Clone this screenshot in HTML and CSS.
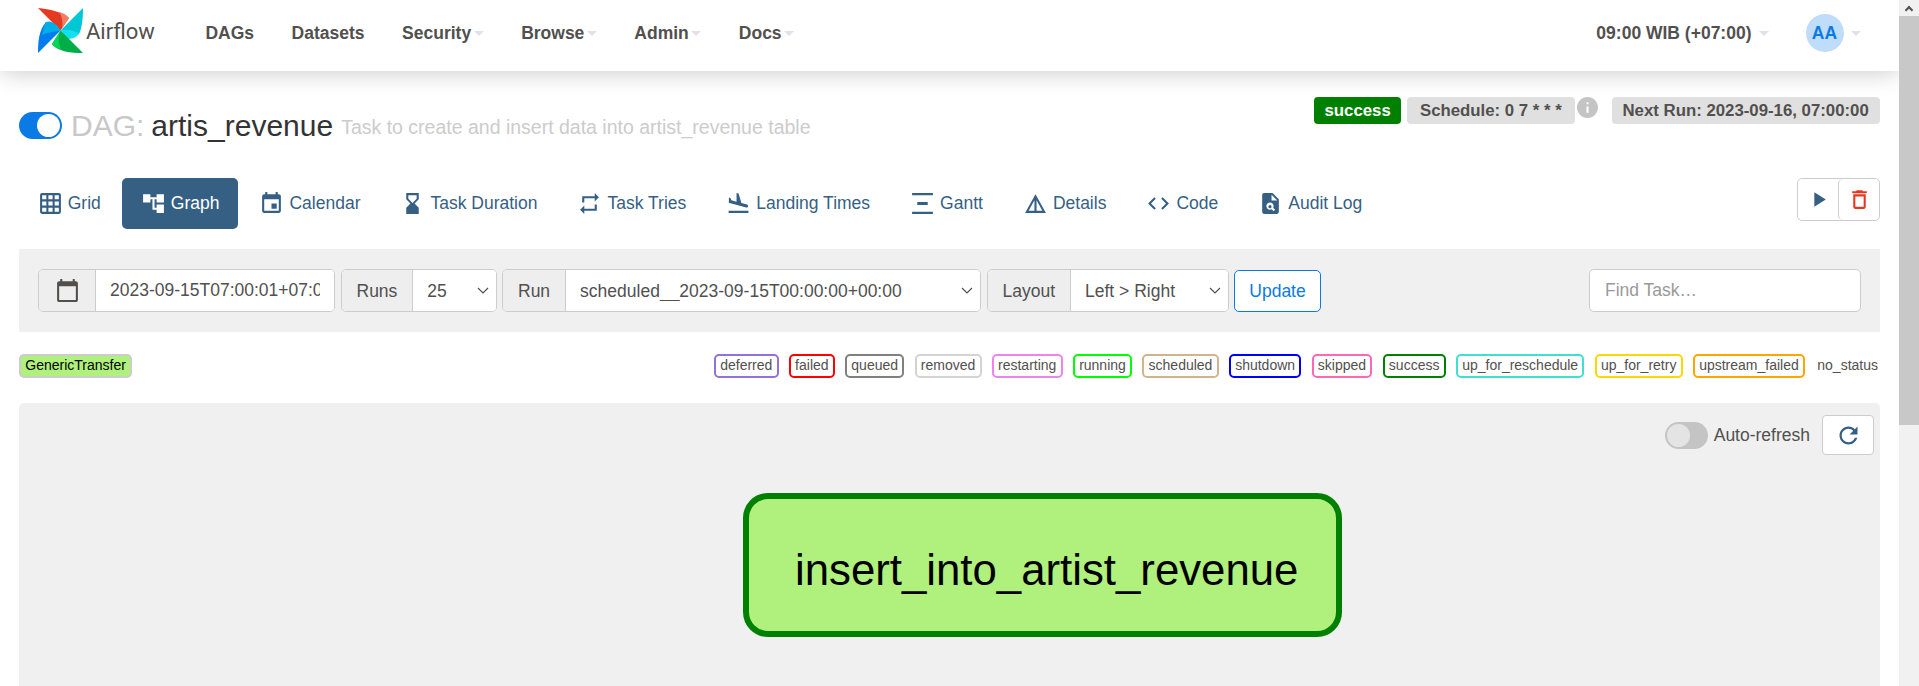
FILE: index.html
```html
<!DOCTYPE html>
<html lang="en">
<head>
  <meta charset="UTF-8" />
  <title>Airflow - artis_revenue</title>
  <link rel="stylesheet" href="styles.css">
</head>
<body>
  <div class="page">
    <nav class="navbar">
      <a class="brand">
        <svg class="pinwheel" viewBox="0 0 45 45">
          <path fill="#e43921" d="M0 0C12 1 24 4 31 10L22.5 22.5Z"/>
          <path fill="#f37c64" d="M21 4C25 5 29 7 31 10L24 20C25 14 24 8 21 4Z"/>
          <path fill="#00c7d4" d="M45 0C45 10 44 20 41 26L22.5 22.5Z"/>
          <path fill="#11e1ee" d="M22.5 22.5C27 21 36 22 41 26C38 30 33 31 29 31Z"/>
          <path fill="#00ad46" d="M45 45C33 45 20 44 14 36L22.5 22.5Z"/>
          <path fill="#04d659" d="M22.5 22.5L14 36C16 39 19 40 23 41C20 34 20 28 22.5 22.5Z"/>
          <path fill="#017cee" d="M0 45C0 33 1 22 8 14L22.5 22.5Z"/>
          <path fill="#00ade6" d="M22.5 22.5C17 24 10 24 4 27C5 22 6 18 8 14C13 12 19 16 22.5 22.5Z"/>
        </svg>
        <span class="brand-name">Airflow</span>
      </a>
      <ul class="nav-links">
        <li>DAGs</li>
        <li>Datasets</li>
        <li>Security<i class="caret"></i></li>
        <li>Browse<i class="caret"></i></li>
        <li>Admin<i class="caret"></i></li>
        <li>Docs<i class="caret"></i></li>
      </ul>
      <div class="nav-right">
        <span class="clock">09:00 WIB (+07:00)<i class="caret"></i></span>
        <span class="avatar">AA</span><i class="caret"></i>
      </div>
    </nav>

    <main class="content">
      <div class="dag-header">
        <h3 class="dag-title">
          <span class="switch switch-on"><span class="knob"></span></span>
          <span class="dag-prefix">DAG:</span>
          <span>artis_revenue</span>
          <small class="dag-desc">Task to create and insert data into artist_revenue table</small>
        </h3>
        <div class="dag-labels">
          <span class="label label-success">success</span>
          <span class="label label-schedule">Schedule: 0 7 * * *</span>
          <svg class="info-icon" viewBox="2 2 20 20"><path d="M12 2C6.48 2 2 6.48 2 12s4.48 10 10 10 10-4.48 10-10S17.52 2 12 2zm1 15h-2v-6h2v6zm0-8h-2V7h2v2z"/></svg>
          <span class="label label-next">Next Run: 2023-09-16, 07:00:00</span>
        </div>
      </div>

      <div class="tabs-row">
        <ul class="tabs">
          <li><svg class="icon" viewBox="0 0 24 24"><path d="M20 2H4c-1.1 0-2 .9-2 2v16c0 1.1.9 2 2 2h16c1.1 0 2-.9 2-2V4c0-1.1-.9-2-2-2zM8 20H4v-4h4v4zm0-6H4v-4h4v4zm0-6H4V4h4v4zm6 12h-4v-4h4v4zm0-6h-4v-4h4v4zm0-6h-4V4h4v4zm6 12h-4v-4h4v4zm0-6h-4v-4h4v4zm0-6h-4V4h4v4z"/></svg>Grid</li>
          <li class="active"><svg class="icon" viewBox="0 0 24 24"><path d="M22 11V3h-7v3H9V3H2v8h7V8h2v10h4v3h7v-8h-7v3h-2V8h2v3z"/></svg>Graph</li>
          <li><svg class="icon" viewBox="0 0 24 24"><path d="M17 12h-5v5h5v-5zM16 1v2H8V1H6v2H5c-1.11 0-1.99.9-1.99 2L3 19c0 1.1.89 2 2 2h14c1.1 0 2-.9 2-2V5c0-1.1-.9-2-2-2h-1V1h-2zm3 18H5V8h14v11z"/></svg>Calendar</li>
          <li><svg class="icon" viewBox="0 0 24 24"><path d="M18 22l-.01-6L14 12l3.99-4.01L18 2H6v6l4 4-4 3.99V22h12zM8 7.5V4h8v3.5l-4 4-4-4z"/></svg>Task Duration</li>
          <li><svg class="icon" viewBox="0 0 24 24"><path d="M7 7h10v3l4-4-4-4v3H5v6h2V7zm10 10H7v-3l-4 4 4 4v-3h12v-6h-2v4z"/></svg>Task Tries</li>
          <li><svg class="icon" viewBox="0 0 24 24"><path d="M2.5 19h19v2h-19zm7.18-5.73l4.35 1.16 5.31 1.42c.8.21 1.62-.26 1.84-1.06.21-.8-.26-1.62-1.06-1.84l-5.31-1.42-2.76-9.02L10.12 2v8.28L5.15 8.95l-.93-2.32-1.45-.39v5.17l1.6.43 5.31 1.43z"/></svg>Landing Times</li>
          <li><svg class="icon" viewBox="0 0 24 24"><path d="M22 2v2H2V2h20zM7 10.5v3h10v-3H7zM2 20v2h20v-2H2z"/></svg>Gantt</li>
          <li><svg class="icon" viewBox="0 0 24 24"><path d="M12 3L2 21h20L12 3zm1 5.92L18.6 19H13V8.92zm-2 0V19H5.4L11 8.92z"/></svg>Details</li>
          <li><svg class="icon" viewBox="0 0 24 24"><path d="M9.4 16.6L4.8 12l4.6-4.6L8 6l-6 6 6 6 1.4-1.4zm5.2 0l4.6-4.6-4.6-4.6L16 6l6 6-6 6-1.4-1.4z"/></svg>Code</li>
          <li><svg class="icon" viewBox="0 0 24 24"><path d="M14 2H6c-1.1 0-1.99.9-1.99 2L4 20c0 1.1.89 2 1.99 2H18c1.1 0 2-.9 2-2V8l-6-6zm1.04 17.45l-1.88-1.88c-1.33.71-3.01.53-4.13-.59-1.37-1.37-1.37-3.58 0-4.95s3.58-1.37 4.95 0c1.12 1.12 1.31 2.8.59 4.13l1.88 1.88-1.41 1.41zM13 9V3.5L18.5 9H13z"/><circle cx="11.5" cy="15" r="1.5"/></svg>Audit Log</li>
        </ul>
        <div class="btn-group">
          <button class="btn-icon"><svg class="icon" viewBox="0 0 24 24"><path d="M8 5v14l11-7z"/></svg></button>
          <button class="btn-icon btn-delete"><svg class="icon" viewBox="0 0 24 24"><path d="M6 19c0 1.1.9 2 2 2h8c1.1 0 2-.9 2-2V7H6v12zM8 9h8v10H8V9zm7.5-5l-1-1h-5l-1 1H5v2h14V4z"/></svg></button>
        </div>
      </div>

      <form class="filter-bar">
        <div class="input-group group-date">
          <span class="addon addon-cal"><svg class="icon" viewBox="0 0 24 24"><path d="M20 3h-1V1h-2v2H7V1H5v2H4c-1.1 0-2 .9-2 2v16c0 1.1.9 2 2 2h16c1.1 0 2-.9 2-2V5c0-1.1-.9-2-2-2zm0 18H4V8h16v13z"/></svg></span>
          <input class="field" type="text" value="2023-09-15T07:00:01+07:00">
        </div>
        <div class="input-group group-runs">
          <span class="addon">Runs</span>
          <select class="field"><option>25</option></select>
        </div>
        <div class="input-group group-run">
          <span class="addon">Run</span>
          <select class="field"><option>scheduled__2023-09-15T00:00:00+00:00</option></select>
        </div>
        <div class="input-group group-layout">
          <span class="addon">Layout</span>
          <select class="field"><option>Left &gt; Right</option></select>
        </div>
        <button class="btn-update" type="button">Update</button>
        <input class="find-task" type="text" placeholder="Find Task…">
      </form>

      <div class="legend">
        <span class="chip chip-op">GenericTransfer</span>
        <div class="states">
          <span class="chip" style="border-color: mediumpurple">deferred</span>
          <span class="chip" style="border-color: red">failed</span>
          <span class="chip" style="border-color: gray">queued</span>
          <span class="chip" style="border-color: lightgrey">removed</span>
          <span class="chip" style="border-color: violet">restarting</span>
          <span class="chip" style="border-color: lime">running</span>
          <span class="chip" style="border-color: tan">scheduled</span>
          <span class="chip" style="border-color: blue">shutdown</span>
          <span class="chip" style="border-color: hotpink">skipped</span>
          <span class="chip" style="border-color: green">success</span>
          <span class="chip" style="border-color: turquoise">up_for_reschedule</span>
          <span class="chip" style="border-color: gold">up_for_retry</span>
          <span class="chip" style="border-color: orange">upstream_failed</span>
          <span class="chip chip-none">no_status</span>
        </div>
      </div>

      <section class="graph">
        <div class="graph-tools">
          <span class="switch"><span class="knob"></span></span>
          <span class="auto-label">Auto-refresh</span>
          <button class="btn-refresh"><svg class="icon" viewBox="0 0 24 24"><path d="M17.65 6.35C16.2 4.9 14.21 4 12 4c-4.42 0-7.99 3.58-7.99 8s3.57 8 7.99 8c3.73 0 6.84-2.55 7.73-6h-2.08c-.82 2.33-3.04 4-5.65 4-3.31 0-6-2.69-6-6s2.69-6 6-6c1.66 0 3.14.69 4.22 1.78L13 11h7V4l-2.35 2.35z"/></svg></button>
        </div>
        <div class="task-node">insert_into_artist_revenue</div>
      </section>
    </main>
  </div>

  <div class="scrollbar">
    <div class="scroll-btn"><i class="scroll-arrow"></i></div>
    <div class="scroll-thumb"></div>
  </div>
</body>
</html>
```

FILE: styles.css
```css
:root {
  --text: #51504f;
  --steel: #365f84;
  --panel: #f0f0f0;
  --line: #ccc;
  --node: #b0f07c;
}

* {
  box-sizing: border-box;
  margin: 0;
  padding: 0;
}

body {
  font-family: "Liberation Sans", Arial, sans-serif;
  font-size: 17.5px;
  color: var(--text);
  background: #fff;
  display: flex;
  height: 100vh;
  overflow: hidden;
}

ul {
  list-style: none;
}

.page {
  flex: 1;
  min-width: 0;
}

/* top bar */
.navbar {
  height: 71px;
  display: flex;
  align-items: center;
  padding: 0 38px 0 38px;
  box-shadow: 0 2px 22px rgba(0, 0, 0, 0.2);
  background: #fff;
}

.brand {
  display: flex;
  align-items: center;
  margin-bottom: 11px;
}

.pinwheel {
  width: 45px;
  height: 45px;
  display: block;
}

.brand-name {
  font-family: Roboto, sans-serif;
  font-size: 22px;
  margin-left: 3px;
  margin-top: 3px;
}

.nav-links {
  display: flex;
  margin-left: 32px;
  font-weight: bold;
  padding-bottom: 5px;
}

.nav-links li {
  padding: 0 18.75px;
}

.caret {
  display: inline-block;
  vertical-align: middle;
  margin-left: 2.5px;
  border-top: 5.5px solid #e6dfea;
  border-left: 5px solid transparent;
  border-right: 5px solid transparent;
}

.nav-right {
  margin-left: auto;
  display: flex;
  align-items: center;
  font-weight: bold;
  padding-bottom: 5px;
}

.clock .caret {
  margin-left: 7px;
}

.avatar {
  width: 38px;
  height: 38px;
  border-radius: 50%;
  background: #bfdcfb;
  color: #0a7ae5;
  display: flex;
  align-items: center;
  justify-content: center;
  margin-left: 37px;
  margin-right: 5px;
}

/* dag title */
.content {
  padding: 0 19px;
}

.dag-header {
  height: 107px;
  padding-top: 26px;
  display: flex;
  justify-content: space-between;
}

.dag-title {
  font-size: 30px;
  font-weight: normal;
  color: #333;
  display: flex;
  align-items: center;
  height: 27px;
  margin-top: 15px;
  white-space: nowrap;
}

.dag-prefix {
  color: #c8c8c8;
  margin: 0 7px 0 9px;
}

.dag-desc {
  font-size: 19.5px;
  color: #ccc;
  margin-left: 8px;
  margin-top: 4px;
}

.switch {
  width: 43px;
  height: 27px;
  border-radius: 14px;
  background: #c4c4c4;
  display: flex;
  padding: 2px;
  flex-shrink: 0;
}

.switch-on {
  background: #0a7ae5;
  justify-content: flex-end;
}

.knob {
  width: 23px;
  height: 23px;
  border-radius: 50%;
  background: #fff;
}

.switch:not(.switch-on) .knob {
  background: #e4e4e4;
}

.dag-labels {
  display: flex;
  align-items: flex-start;
}

.label {
  height: 27px;
  line-height: 27px;
  padding: 0 10.5px;
  background: #e0e0e0;
  border-radius: 4px;
  font-size: 16.8px;
  font-weight: bold;
  margin-left: 6px;
}

.label-success {
  background: green;
  color: #fff;
  width: 87px;
}

.label-schedule {
  width: 168px;
  padding-left: 13px;
}

.label-next {
  margin-left: 14px;
  width: 268px;
}

.info-icon {
  width: 21px;
  height: 21px;
  fill: #c4c4c4;
  margin-left: 2px;
}

/* tabs */
.tabs-row {
  display: flex;
  justify-content: space-between;
  align-items: flex-start;
  height: 71px;
}

.tabs {
  display: flex;
  gap: 2.5px;
}

.tabs li {
  display: flex;
  align-items: center;
  height: 51px;
  padding: 0 18.75px;
  color: var(--steel);
  border-radius: 5px;
  white-space: nowrap;
}

.tabs li.active {
  background: var(--steel);
  color: #fff;
}

.icon {
  width: 25px;
  height: 25px;
  fill: currentColor;
  display: block;
  flex-shrink: 0;
}

.tabs .icon {
  margin-right: 5px;
}

.btn-group {
  display: flex;
  border: 1px solid var(--line);
  border-radius: 5px;
  height: 43px;
  width: 83px;
}

.btn-icon {
  flex: 1;
  border: 0;
  background: #fff;
  color: var(--steel);
  display: flex;
  align-items: center;
  justify-content: center;
  border-radius: 5px;
}

.btn-delete {
  border-left: 1px solid var(--line);
  color: #e43921;
}

/* filter bar */
.filter-bar {
  height: 83px;
  background: var(--panel);
  padding: 20px 19px;
  display: flex;
  gap: 5.5px;
}

.input-group {
  height: 43px;
  display: flex;
  border: 1px solid var(--line);
  border-radius: 5px;
  overflow: hidden;
  background: #fff;
}

.group-date { width: 297px; }
.group-runs { width: 156px; }
.group-run { width: 479px; }
.group-layout { width: 242px; }

.addon {
  background: #eee;
  border-right: 1px solid var(--line);
  padding: 1px 15px 0;
  display: flex;
  align-items: center;
  flex-shrink: 0;
}

.addon-cal {
  padding: 0 15.5px;
}

.field {
  flex: 1;
  min-width: 0;
  border: 0;
  outline: 0;
  background: #fff;
  padding: 0 14px;
  font: inherit;
  color: var(--text);
}

select.field {
  appearance: none;
  padding: 0 14px;
  background: #fff url("data:image/svg+xml,%3Csvg xmlns='http://www.w3.org/2000/svg' width='12' height='7'%3E%3Cpath d='M1 1l5 5 5-5' fill='none' stroke='%2351504f' stroke-width='1.2'/%3E%3C/svg%3E") no-repeat right 7px center;
}

.btn-update {
  width: 87px;
  height: 42px;
  margin-top: 1px;
  border: 1px solid #0a7ae5;
  border-radius: 5px;
  background: #fff;
  color: #0a7ae5;
  font: inherit;
}

.find-task {
  width: 272px;
  height: 43px;
  margin-left: auto;
  border: 1px solid var(--line);
  border-radius: 5px;
  padding: 0 15px;
  font: inherit;
  color: var(--text);
}

.find-task::placeholder {
  color: #999;
}

/* legend */
.legend {
  display: flex;
  justify-content: space-between;
  margin: 22px 0 25px;
}

.states {
  display: flex;
  gap: 10.25px;
}

.chip {
  height: 24px;
  line-height: 19px;
  padding: 0 4.25px;
  border: 2.5px solid #fff;
  border-radius: 5px;
  font-size: 14px;
  white-space: nowrap;
}

.chip-op {
  background: var(--node);
  border-color: #ccc;
  color: #000;
}

.chip-none {
  padding: 0;
}

/* graph */
.graph {
  position: relative;
  height: 300px;
  background: var(--panel);
  border-radius: 5px 5px 0 0;
}

.graph-tools {
  display: flex;
  align-items: center;
  justify-content: flex-end;
  padding: 12px 6px 0 0;
}

.auto-label {
  margin: 0 12px 0 6px;
}

.btn-refresh {
  width: 52px;
  height: 40px;
  background: #fff;
  border: 1px solid var(--line);
  border-radius: 4px;
  color: var(--steel);
  display: flex;
  align-items: center;
  justify-content: center;
}

.btn-refresh .icon {
  width: 27px;
  height: 27px;
}

.task-node {
  position: absolute;
  left: 724px;
  top: 90px;
  width: 599px;
  height: 144px;
  border: 6px solid green;
  border-radius: 25px;
  background: var(--node);
  color: #000;
  font-size: 43.75px;
  display: flex;
  align-items: center;
  padding: 9px 0 0 46px;
}

/* window scrollbar */
.scrollbar {
  width: 20px;
  background: #f1f1f1;
  flex-shrink: 0;
}

.scroll-btn {
  height: 16px;
  display: flex;
  align-items: center;
  justify-content: center;
}

.scroll-arrow {
  width: 6px;
  height: 6px;
  margin-top: 3px;
  border-top: 2px solid #505050;
  border-left: 2px solid #505050;
  transform: rotate(45deg);
}

.scroll-thumb {
  height: 409px;
  background: #c8c8c8;
}
```
